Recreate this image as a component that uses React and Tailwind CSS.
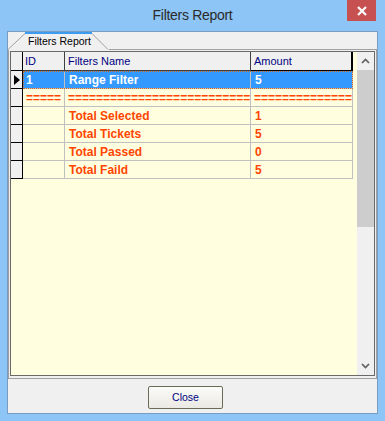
const ROWS = [
  { name: "Total Selected", amount: "1" },
  { name: "Total Tickets", amount: "5" },
  { name: "Total Passed", amount: "0" },
  { name: "Total Faild", amount: "5" },
];

function Chevron({ up }) {
  return (
    <svg width="9" height="6" viewBox="0 0 9 6">
      <polyline
        points={up ? "1,5 4.5,1.5 8,5" : "1,1 4.5,4.5 8,1"}
        fill="none"
        stroke="#606060"
        strokeWidth="1.7"
      />
    </svg>
  );
}

function RowHead({ selected }) {
  return (
    <div className="w-[12px] h-full flex items-center justify-center bg-[#f0f0f0] border-r border-b border-black">
      {selected && (
        <svg width="6" height="10" viewBox="0 0 6 10">
          <polygon points="0,0 6,5 0,10" fill="#000" />
        </svg>
      )}
    </div>
  );
}

const Cell = ({ w, className = "", children }) => (
  <div
    className={`${w} h-full flex items-center pl-[3px] overflow-hidden whitespace-nowrap border-r border-b border-[#c0c0c0] ${className}`}
  >
    {children}
  </div>
);

const Grid = () => {
  return (
    <div className="flex h-[325px] border border-[#696969] bg-[#ffffe0]">
      <div className="flex-1 flex flex-col">
        {/* header */}
        <div className="flex h-[19px] text-[11px] text-[#000080]">
          <div className="w-[12px] h-full bg-[#f0f0f0] border-r border-b border-black" />
          <div className="w-[42px] h-full flex items-center pl-[2px] bg-[#f0f0f0] border-r border-b border-[#404040]">ID</div>
          <div className="w-[186px] h-full flex items-center pl-[3px] bg-[#f0f0f0] border-r border-b border-[#404040]">Filters Name</div>
          <div className="w-[102px] h-full flex items-center pl-[3px] bg-[#f0f0f0] border-r-2 border-b border-black">Amount</div>
        </div>

        {/* selected row */}
        <div className="flex h-[18px] text-[12px] font-bold text-white">
          <RowHead selected />
          <div className="flex h-full outline outline-1 outline-dotted outline-[#d2691e] -outline-offset-1">
            <Cell w="w-[42px]" className="bg-[#3399ff]">1</Cell>
            <Cell w="w-[186px]" className="bg-[#3399ff] pl-[4px]">Range Filter</Cell>
            <Cell w="w-[102px]" className="bg-[#3399ff] pl-[4px]">5</Cell>
          </div>
        </div>

        {/* separator row */}
        <div className="flex h-[18px] text-[12px] font-bold text-[#ff4500]">
          <RowHead />
          <Cell w="w-[42px]">=====</Cell>
          <Cell w="w-[186px]" className="pl-[2px]">==========================</Cell>
          <Cell w="w-[102px]" className="pl-[2px]">==============</Cell>
        </div>

        {ROWS.map((r) => (
          <div key={r.name} className="flex h-[18px] text-[12px] font-bold text-[#ff4500]">
            <RowHead />
            <Cell w="w-[42px]" />
            <Cell w="w-[186px]" className="pl-[4px]">{r.name}</Cell>
            <Cell w="w-[102px]" className="pl-[4px]">{r.amount}</Cell>
          </div>
        ))}
      </div>

      {/* scrollbar */}
      <div className="w-[17px] flex flex-col bg-[#f0f0f0]">
        <div className="h-[18px] flex items-center justify-center">
          <Chevron up />
        </div>
        <div className="h-[157px] bg-[#cdcdcd]" />
        <div className="flex-1" />
        <div className="h-[18px] flex items-center justify-center">
          <Chevron />
        </div>
      </div>
    </div>
  );
};

export default function App() {
  return (
    <div className="w-[385px] h-[421px] bg-[#8cc5f6] font-['Liberation_Sans',Arial,sans-serif] flex flex-col">
      {/* title bar */}
      <div className="relative h-[31px] flex items-center justify-center">
        <span className="text-[14px] tracking-[-0.3px] text-[#2b2b2b] pb-[1px]">Filters Report</span>
        <button className="absolute top-0 right-[9px] w-[29px] h-[21px] bg-[#c75050] flex items-center justify-center">
          <svg width="10" height="10" viewBox="0 0 10 10">
            <path d="M1 1 L9 9 M9 1 L1 9" stroke="#fff" strokeWidth="2.2" />
          </svg>
        </button>
      </div>

      {/* client area */}
      <div className="ml-[7px] w-[371px] h-[383px] bg-[#f0f0f0] border border-[#7a9cc3] flex flex-col">
        {/* tab strip */}
        <div className="flex h-[18px]">
          <div className="relative w-[101px] h-full flex items-center pl-[20px] text-[10.5px] text-black">
            <svg className="absolute left-0 top-0" width="101" height="18" viewBox="0 0 101 18">
              <polyline points="0,17.5 17,1.5 84,1.5 100,17.5" fill="#f0f0f0" stroke="#a0a0a0" strokeWidth="1" />
              <rect x="17" y="0" width="67" height="2" fill="#3d9bf0" />
            </svg>
            <span className="relative pt-[2px]">Filters Report</span>
          </div>
          <div className="flex-1 border-b border-[#a0a0a0]" />
        </div>

        {/* tab panel */}
        <div className="h-[329px] p-[1px] border-l border-r border-b border-[#a0a0a0]">
          <Grid />
        </div>

        {/* buttons */}
        <div className="pt-[5px] pl-[140px]">
          <button className="w-[75px] h-[23px] rounded-[2px] border border-[#6b6b58] bg-gradient-to-b from-[#fbfbf9] to-[#eae9e3] text-[10.5px] text-[#000080]">
            Close
          </button>
        </div>
      </div>
    </div>
  );
}
